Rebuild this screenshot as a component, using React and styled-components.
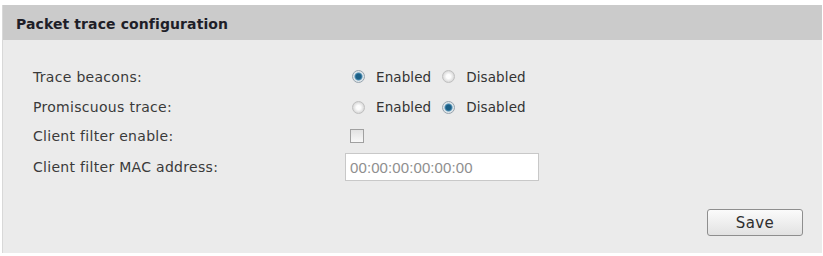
import React from "react";
import styled, { createGlobalStyle } from "styled-components";

const Global = createGlobalStyle`
  html, body { margin: 0; padding: 0; background: #ffffff; }
  body { width: 823px; height: 256px; overflow: hidden; }
`;

const Panel = styled.section`
  margin: 5px 1px 0 2px;
  border-left: 1px solid #d8d8d8;
  background: #ebebeb;
  height: 248px;
  display: flex;
  flex-direction: column;
  font-family: "DejaVu Sans", Verdana, sans-serif;
  color: #333;
`;

const Header = styled.header`
  background: #cbcbcb;
  height: 35px;
  box-sizing: border-box;
  display: flex;
  align-items: center;
  padding: 3px 0 0 13px;
  font-weight: bold;
  font-size: 14px;
  letter-spacing: 0.1px;
  color: #1e1e28;
`;

const Form = styled.div`
  display: grid;
  grid-template-columns: 312px 1fr;
  grid-template-rows: 31px 30px 27px 36px;
  align-items: center;
  padding: 21px 0 0 30px;
`;

const Label = styled.div`
  font-size: 14px;
  letter-spacing: 0.3px;
  color: #3a3a3a;
`;

const Controls = styled.div`
  display: flex;
  align-items: center;
  font-size: 13.5px;
  letter-spacing: 0.1px;
  color: #333;
`;

const RadioLabel = styled.label`
  display: flex;
  align-items: center;
  gap: 11px;
  margin-right: 11px;
`;

const Radio = styled.span`
  width: 13px;
  height: 13px;
  border-radius: 50%;
  box-sizing: border-box;
  border: 1px solid ${(p) => (p.checked ? "#97a4ae" : "#bfbfbf")};
  background: ${(p) =>
    p.checked
      ? "radial-gradient(circle, #1b5f86 0 2.5px, #4f8fb4 3.5px, #dfe6ea 4.5px)"
      : "radial-gradient(circle, #fdfdfd 0 2px, #dadada 5.5px)"};
  margin-left: ${(p) => p.offset || 0}px;
`;

const Checkbox = styled.span`
  width: 14px;
  height: 14px;
  box-sizing: border-box;
  border: 1px solid #a0a0a0;
  background: linear-gradient(#e2e2e2, #f8f8f8);
  margin-left: 5px;
`;

const TextInput = styled.div`
  width: 194px;
  height: 28px;
  box-sizing: border-box;
  border: 1px solid #c8c8c8;
  background: #fff;
  display: flex;
  align-items: center;
  padding-left: 4px;
  font-family: "Liberation Sans", Arial, sans-serif;
  font-size: 15px;
  letter-spacing: 0.1px;
  color: #8f8f8f;
`;

const Footer = styled.div`
  display: flex;
  justify-content: flex-end;
  padding: 24px 19px 0 0;
`;

const Button = styled.button`
  width: 96px;
  height: 27px;
  border: 1px solid #8e8e8e;
  border-radius: 3px;
  background: linear-gradient(#fbfbfb, #e2e2e2);
  font-family: "DejaVu Sans", Verdana, sans-serif;
  font-size: 15px;
  letter-spacing: 0.4px;
  color: #2e2e2e;
  padding: 0;
`;

const rows = [
  ["Trace beacons:", "radio", true],
  ["Promiscuous trace:", "radio", false],
  ["Client filter enable:", "check"],
  ["Client filter MAC address:", "input"],
];

export default function App() {
  return (
    <>
      <Global />
      <Panel>
        <Header>Packet trace configuration</Header>
        <Form>
          {rows.map(([label, kind, en]) => (
            <React.Fragment key={label}>
              <Label>{label}</Label>
              <Controls>
                {kind === "radio" && (
                  <>
                    <RadioLabel>
                      <Radio checked={en} offset={7} />
                      Enabled
                    </RadioLabel>
                    <RadioLabel>
                      <Radio checked={!en} />
                      Disabled
                    </RadioLabel>
                  </>
                )}
                {kind === "check" && <Checkbox />}
                {kind === "input" && <TextInput>00:00:00:00:00:00</TextInput>}
              </Controls>
            </React.Fragment>
          ))}
        </Form>
        <Footer>
          <Button>Save</Button>
        </Footer>
      </Panel>
    </>
  );
}
